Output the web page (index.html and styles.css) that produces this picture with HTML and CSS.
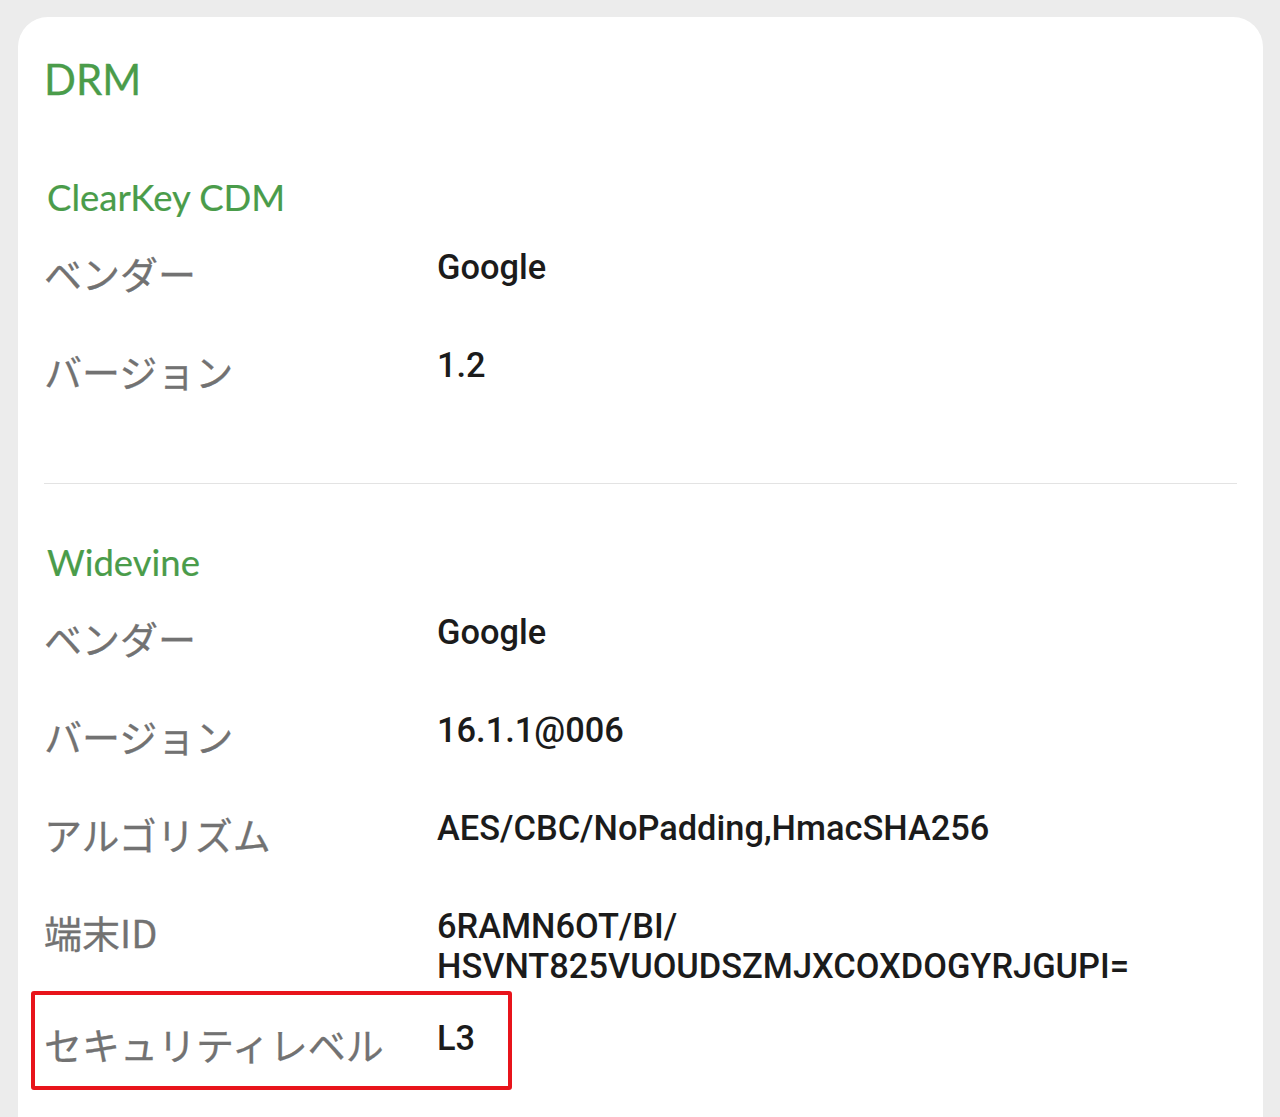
FILE: index.html
```html
<!DOCTYPE html>
<html lang="ja">
<head>
<meta charset="utf-8">
<title>DRM</title>
<link rel="stylesheet" href="styles.css">
</head>
<body>
<div class="page">
  <div class="card">
    <h1 class="title">DRM</h1>
    <section class="group">
      <h2 class="group-title">ClearKey CDM</h2>
      <div class="row"><div class="label">ベンダー</div><div class="value">Google</div></div>
      <div class="row"><div class="label">バージョン</div><div class="value">1.2</div></div>
    </section>
    <hr class="divider">
    <section class="group group-last">
      <h2 class="group-title">Widevine</h2>
      <div class="row"><div class="label">ベンダー</div><div class="value">Google</div></div>
      <div class="row"><div class="label">バージョン</div><div class="value">16.1.1@006</div></div>
      <div class="row"><div class="label">アルゴリズム</div><div class="value">AES/CBC/NoPadding,HmacSHA256</div></div>
      <div class="row"><div class="label">端末ID</div><div class="value">6RAMN6OT/BI/<br>HSVNT825VUOUDSZMJXCOXDOGYRJGUPI=</div></div>
      <div class="row row-marked"><div class="label">セキュリティレベル</div><div class="value">L3</div><span class="highlight"></span></div>
    </section>
  </div>
</div>
</body>
</html>
```

FILE: styles.css
```css
* { box-sizing: border-box; }
html, body {
  margin: 0;
  padding: 0;
  background: #ececec;
  overflow: hidden;
}
.page {
  padding: 17px 17px 0 18px;
}
.card {
  background: #ffffff;
  border-radius: 30px 30px 0 0;
  padding: 37px 26px 3px 26px;
  min-height: 1100px;
}
.title {
  margin: 0;
  font-family: "Lato", "Noto Sans", sans-serif;
  font-weight: 400;
  font-size: 42px;
  line-height: 50px;
  color: #4a9c4a;
  padding-left: 0;
  -webkit-text-stroke: 0.3px #4a9c4a;
}
.group {
  padding-top: 71px;
  padding-bottom: 56px;
}
.divider + .group {
  padding-top: 56px;
}
.group-last {
  padding-bottom: 0;
}
.divider {
  margin: 0;
  border: 0;
  height: 1px;
  background: #e3e3e3;
}
.group-title {
  margin: 0 0 12px 0;
  font-family: "Lato", "Noto Sans", sans-serif;
  font-weight: 400;
  font-size: 36.5px;
  line-height: 44px;
  color: #4a9c4a;
  padding-left: 3px;
  -webkit-text-stroke: 0.2px #4a9c4a;
}
.row {
  display: flex;
  align-items: flex-start;
  min-height: 98px;
  padding: 16px 0;
  position: relative;
}
.label {
  width: 393px;
  flex: none;
  font-family: "Noto Sans CJK JP", "Noto Sans", sans-serif;
  font-size: 38px;
  line-height: 52px;
  color: #727272;
  -webkit-text-stroke: 0.3px #727272;
}
.value {
  font-family: "Roboto", "Liberation Sans", sans-serif;
  font-weight: 500;
  font-size: 34.4px;
  line-height: 40px;
  color: #1b1b1b;
}
.highlight {
  position: absolute;
  left: -13px;
  top: -11px;
  width: 481px;
  height: 99px;
  border: 4px solid #e8141b;
  border-radius: 3px;
}
```
